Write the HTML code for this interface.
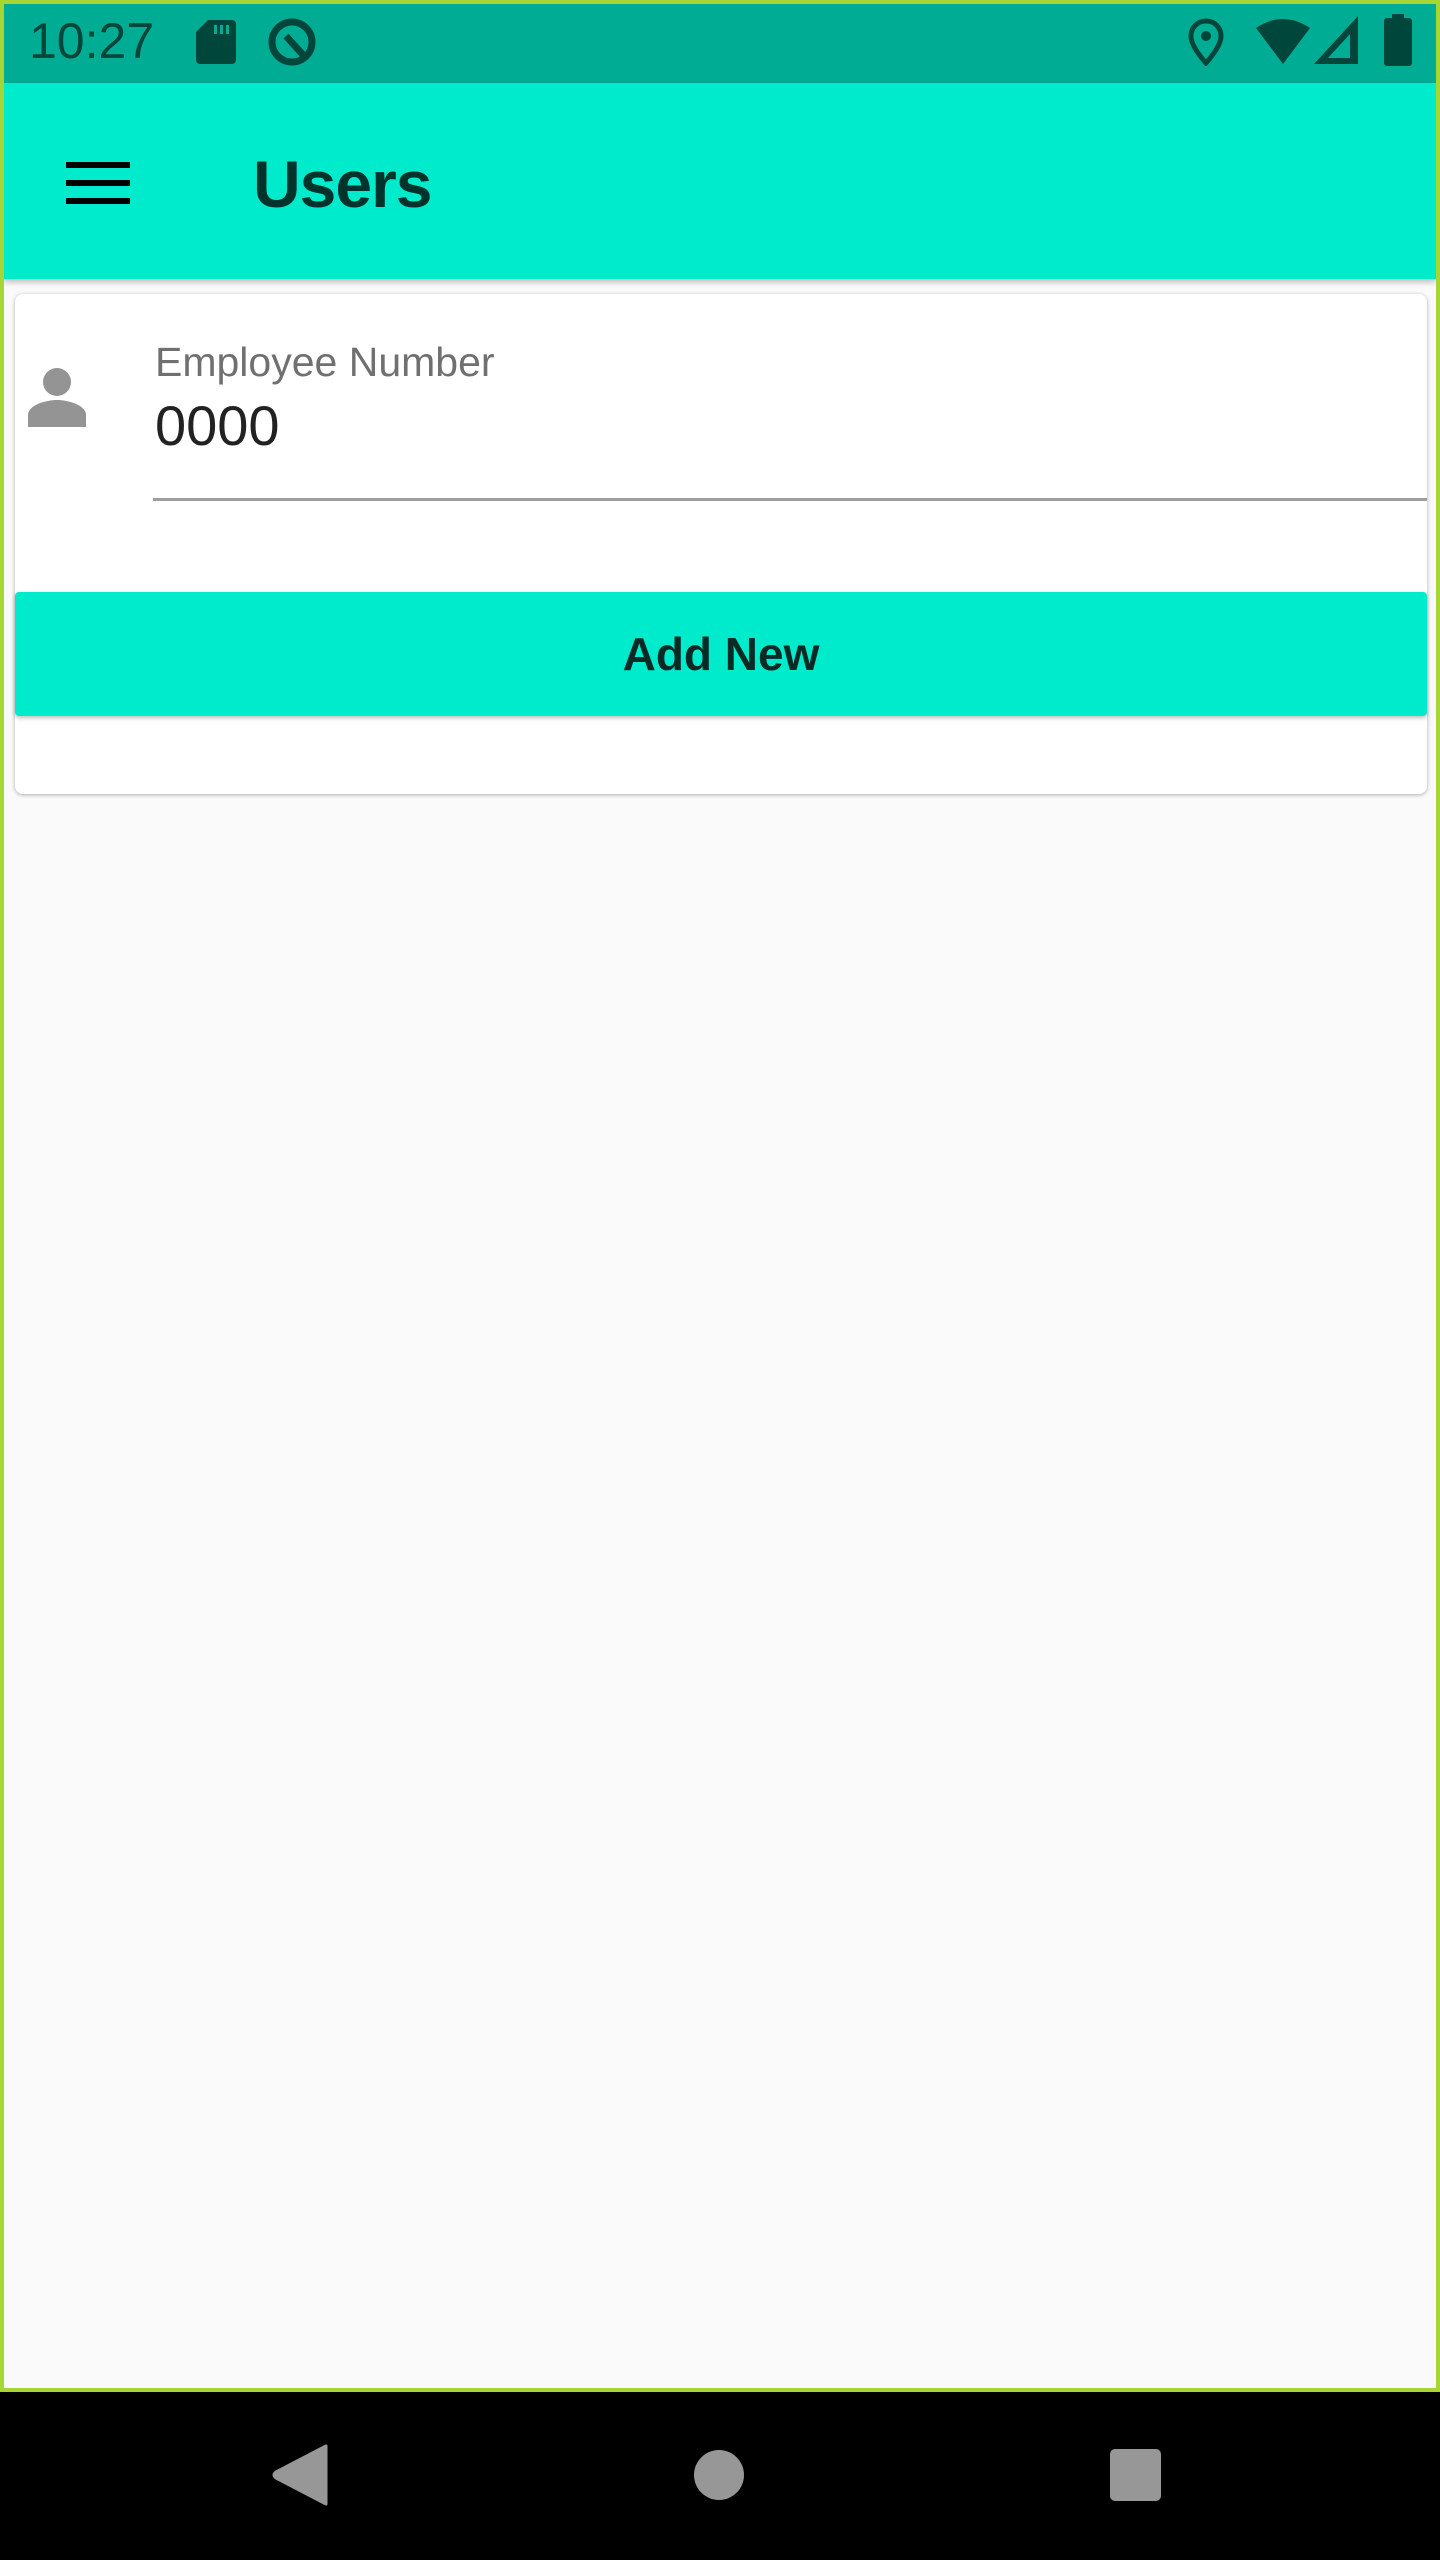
<!DOCTYPE html>
<html><head><meta charset="utf-8"><style>
*{margin:0;padding:0;box-sizing:border-box}
body{width:1440px;height:2560px;position:relative;background:#a6d633;font-family:"Liberation Sans",Roboto,sans-serif;overflow:hidden}
#screen{position:absolute;left:4px;top:4px;width:1432px;height:2384px;background:#fafafa;overflow:hidden}
#status{position:absolute;left:-4px;top:-4px;width:1440px;height:87px;background:#00ad94}
#appbar{position:absolute;left:0;top:79px;width:1432px;height:196px;background:#00ebcb;box-shadow:0 3px 6px rgba(0,0,0,.25)}
.abs{position:absolute}
#nav{position:absolute;left:0;top:2392px;width:1440px;height:168px;background:#000}
</style></head><body>
<div id="screen">
<div id="status">
 <div class="abs" style="left:29px;top:12px;font-size:50px;color:#00463a;">10:27</div>
 <svg class="abs" style="left:196px;top:20px" width="40" height="44" viewBox="0 0 40 44"><path d="M12 0H36a4 4 0 0 1 4 4V40a4 4 0 0 1-4 4H4a4 4 0 0 1-4-4V12Z" fill="#00463a"/><rect x="18" y="5" width="3" height="9" fill="#00ad94"/><rect x="24" y="5" width="3" height="9" fill="#00ad94"/><rect x="30" y="5" width="3" height="9" fill="#00ad94"/></svg>
 <svg class="abs" style="left:266px;top:16px" width="52" height="52" viewBox="0 0 52 52"><circle cx="26" cy="26" r="20" fill="none" stroke="#00463a" stroke-width="7"/><path d="M20 20L38 40" stroke="#00463a" stroke-width="7"/></svg>
 <svg class="abs" style="left:1188px;top:18px" width="36" height="48" viewBox="0 0 36 48"><path d="M18 3C9 3 3 10 3 18c0 11 15 27 15 27s15-16 15-27C33 10 27 3 18 3Z" fill="none" stroke="#00463a" stroke-width="5"/><circle cx="18" cy="18" r="5" fill="#00463a"/></svg>
 <svg class="abs" style="left:1256px;top:18px" width="54" height="46" viewBox="0 0 54 46"><path d="M0 10Q27-8 54 10L27 46Z" fill="#00463a"/></svg>
 <svg class="abs" style="left:1314px;top:16px" width="44" height="48" viewBox="0 0 44 48"><path d="M44 0V48H0Z" fill="#00463a"/><path d="M36 18V42H14Z" fill="#00ad94"/></svg>
 <svg class="abs" style="left:1384px;top:14px" width="28" height="52" viewBox="0 0 28 52"><rect x="8" y="0" width="12" height="6" fill="#00463a"/><rect x="0" y="4" width="28" height="48" rx="3" fill="#00463a"/></svg>
</div>
<div id="appbar">
 <div class="abs" style="left:62px;top:79px;width:64px;height:6px;background:#000"></div>
 <div class="abs" style="left:62px;top:97px;width:64px;height:6px;background:#000"></div>
 <div class="abs" style="left:62px;top:115px;width:64px;height:6px;background:#000"></div>
 <div class="abs" style="left:249px;top:63px;font-size:66px;font-weight:bold;color:#00332b;letter-spacing:-1px">Users</div>
</div>
<div class="abs" style="left:11px;top:290px;width:1412px;height:500px;background:#fff;border-radius:8px;box-shadow:0 1px 4px rgba(0,0,0,.3)">
 <svg class="abs" style="left:13px;top:73px" width="58" height="60" viewBox="0 0 58 60"><circle cx="29" cy="15" r="14" fill="#949494"/><path d="M0 60V48C0 38 18 33 29 33S58 38 58 48V60Z" fill="#949494"/></svg>
 <div class="abs" style="left:140px;top:45px;font-size:41px;color:#707070">Employee Number</div>
 <div class="abs" style="left:140px;top:99px;font-size:56px;color:#222">0000</div>
 <div class="abs" style="left:138px;top:204px;width:1274px;height:3px;background:#9e9e9e"></div>
 <div class="abs" style="left:0;top:298px;width:1412px;height:124px;background:#00ebcb;border-radius:4px;box-shadow:0 2px 4px rgba(0,0,0,.25);text-align:center;line-height:124px;font-size:46px;font-weight:bold;color:#0c2a25">Add New</div>
</div>
</div>
<div id="nav">
 <svg class="abs" style="left:272px;top:52px" width="58" height="62" viewBox="0 0 58 62"><path d="M54 2V60L4 34Q0 31 4 28Z" fill="#979797" stroke="#979797" stroke-width="3" stroke-linejoin="round"/></svg>
 <div class="abs" style="left:694px;top:58px;width:50px;height:50px;border-radius:50%;background:#979797"></div>
 <div class="abs" style="left:1110px;top:57px;width:51px;height:52px;border-radius:5px;background:#979797"></div>
</div>
</body></html>
